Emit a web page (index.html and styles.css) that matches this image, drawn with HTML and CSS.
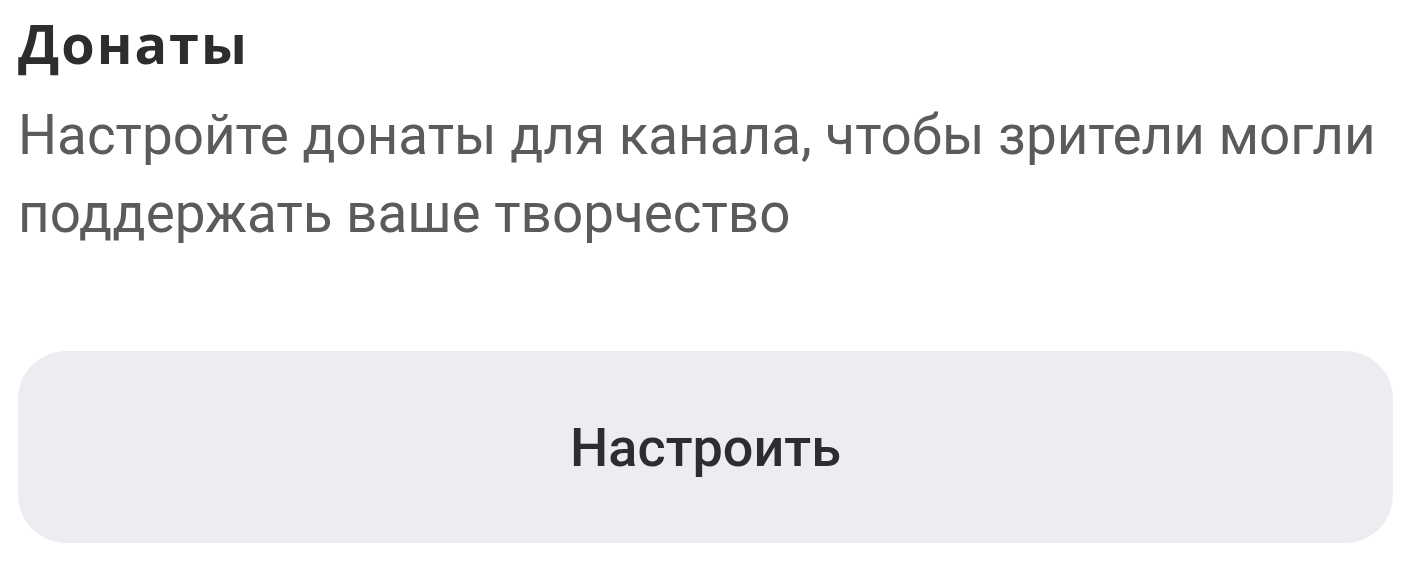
FILE: index.html
```html
<!DOCTYPE html>
<html lang="ru">
<head>
<meta charset="utf-8">
<title>Донаты</title>
<link rel="stylesheet" href="styles.css">
</head>
<body>
<section class="donations">
  <h2 class="donations__title">Донаты</h2>
  <p class="donations__text">Настройте донаты для канала, чтобы зрители могли поддержать ваше творчество</p>
  <button class="donations__button" type="button">Настроить</button>
</section>
</body>
</html>
```
FILE: styles.css
```css
html, body {
  margin: 0;
  padding: 0;
  background: #ffffff;
}

.donations {
  display: flex;
  flex-direction: column;
  padding: 7px 17px 0 18px;
}

.donations__title {
  margin: 0;
  font-family: "Open Sans", Inter, sans-serif;
  font-weight: 700;
  font-size: 54px;
  line-height: 72px;
  letter-spacing: 2px;
  color: #2c2d2e;
}

.donations__text {
  margin: 17px 0 0;
  font-family: Roboto, "Noto Sans", sans-serif;
  font-weight: 400;
  font-size: 54.8px;
  line-height: 78px;
  color: #5b5b5b;
}

.donations__button {
  margin-top: 99px;
  height: 192px;
  border: none;
  border-radius: 48px;
  background: #ecedf1;
  font-family: Roboto, "Noto Sans", sans-serif;
  font-weight: 500;
  font-size: 54px;
  color: #2c2d2e;
  cursor: pointer;
}
```
